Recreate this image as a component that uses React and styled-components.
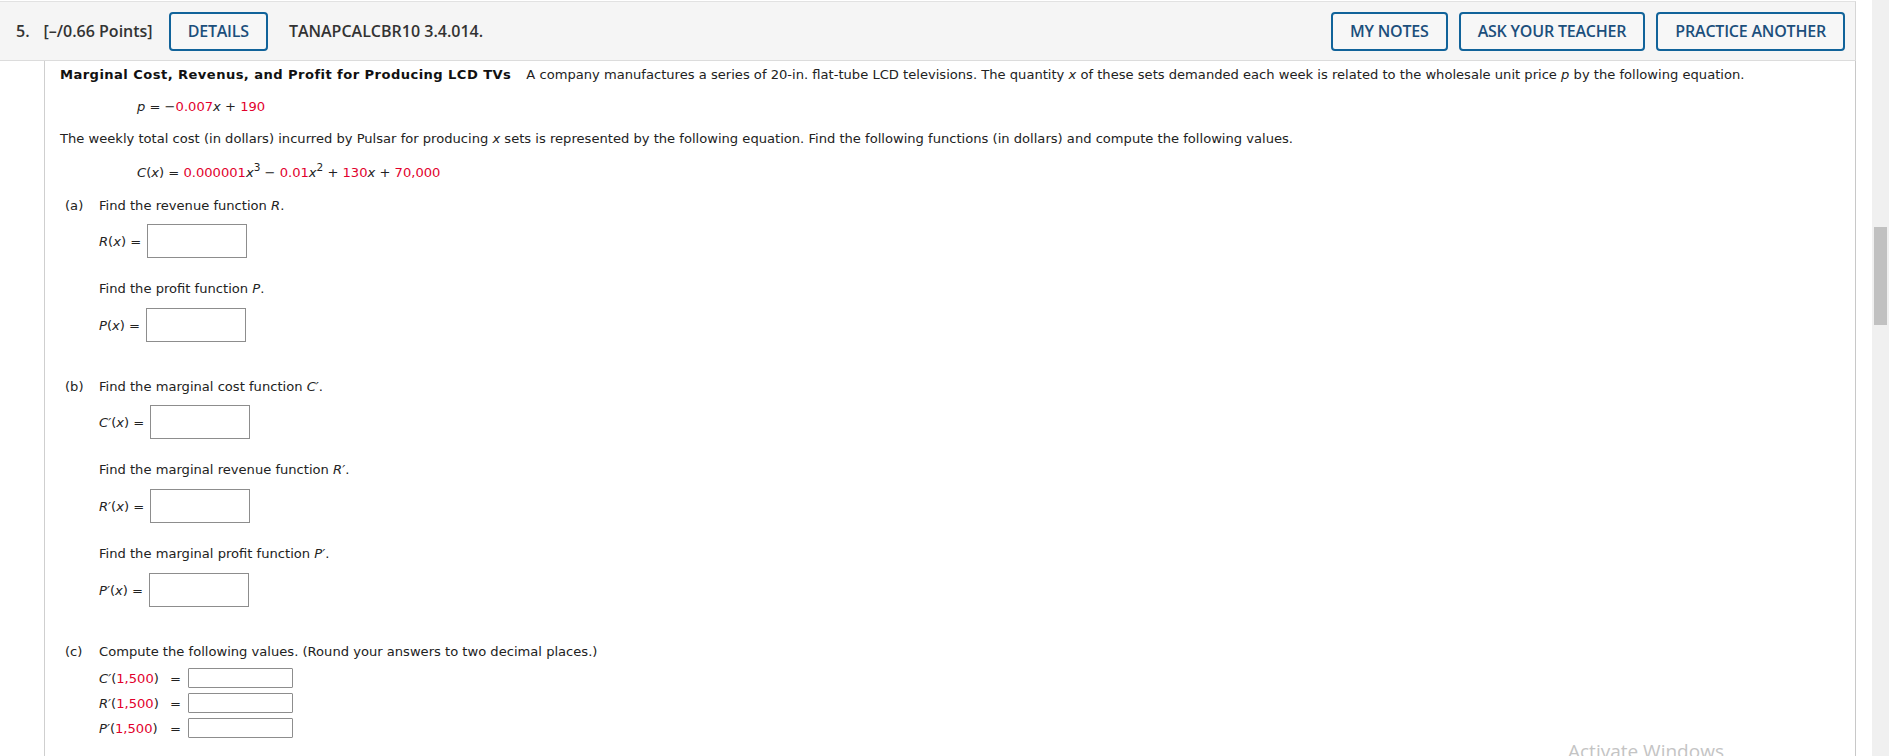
import React from 'react'
import styled, { createGlobalStyle } from 'styled-components'

const GlobalStyle = createGlobalStyle`
  html, body {
    margin: 0;
    padding: 0;
    background: #fff;
  }
  body {
    overflow: hidden;
  }
`

const parts = {
  b: [
    { text: 'Find the marginal cost function ', sym: 'C′', label: 'C′', mt: 9 },
    { text: 'Find the marginal revenue function ', sym: 'R′', label: 'R′', mt: 10 },
    { text: 'Find the marginal profit function ', sym: 'P′', label: 'P′', mt: 10 },
  ],
  c: ['C′', 'R′', 'P′'],
}

const App = () => {
  return (
    <>
      <GlobalStyle />
      <Page>
        <Main>
          <Header>
            <HeaderGroup>
              <QNum>5.</QNum>
              <Points>[–/0.66 Points]</Points>
              <OutlineButton>DETAILS</OutlineButton>
              <Code>TANAPCALCBR10 3.4.014.</Code>
            </HeaderGroup>
            <HeaderGroup $gap={11}>
              <OutlineButton>MY NOTES</OutlineButton>
              <OutlineButton>ASK YOUR TEACHER</OutlineButton>
              <OutlineButton>PRACTICE ANOTHER</OutlineButton>
            </HeaderGroup>
          </Header>

          <Body>
            <Line $mt={5}>
              <Title>Marginal Cost, Revenus, and Profit for Producing LCD TVs</Title>
              A company manufactures a series of 20-in. flat-tube LCD televisions. The quantity <Var>x</Var> of these sets demanded each week is related to the wholesale unit price <Var>p</Var> by the following equation.
            </Line>
            <Equation $mt={14}>
              <Var>p</Var> = −<Red>0.007</Red><Var>x</Var> + <Red>190</Red>
            </Equation>
            <Line $mt={14}>
              The weekly total cost (in dollars) incurred by Pulsar for producing <Var>x</Var> sets is represented by the following equation. Find the following functions (in dollars) and compute the following values.
            </Line>
            <Equation $mt={16}>
              <Var>C</Var>(<Var>x</Var>) = <Red>0.000001</Red><Var>x</Var><Sup>3</Sup> − <Red>0.01</Red><Var>x</Var><Sup>2</Sup> + <Red>130</Red><Var>x</Var> + <Red>70,000</Red>
            </Equation>

            <Part $mt={15}>
              <PartLabel>(a)</PartLabel>
              <PartBody>
                <Line>Find the revenue function <Var>R</Var>.</Line>
                <AnswerRow $mt={9}>
                  <Var>R</Var>(<Var>x</Var>) = <AnswerBox />
                </AnswerRow>
                <Line $mt={22}>Find the profit function <Var>P</Var>.</Line>
                <AnswerRow $mt={10}>
                  <Var>P</Var>(<Var>x</Var>) = <AnswerBox />
                </AnswerRow>
              </PartBody>
            </Part>

            <Part $mt={36}>
              <PartLabel>(b)</PartLabel>
              <PartBody>
                {parts.b.map((q, i) => (
                  <React.Fragment key={q.label}>
                    <Line $mt={i === 0 ? 0 : 22}>
                      {q.text}<Var>{q.sym}</Var>.
                    </Line>
                    <AnswerRow $mt={q.mt}>
                      <Var>{q.label}</Var>(<Var>x</Var>) = <AnswerBox />
                    </AnswerRow>
                  </React.Fragment>
                ))}
              </PartBody>
            </Part>

            <Part $mt={36}>
              <PartLabel>(c)</PartLabel>
              <PartBody>
                <Line>Compute the following values. (Round your answers to two decimal places.)</Line>
                <ValueGrid>
                  {parts.c.map((s) => (
                    <React.Fragment key={s}>
                      <span><Var>{s}</Var>(<Red>1,500</Red>)</span>
                      <span>=</span>
                      <SmallBox />
                    </React.Fragment>
                  ))}
                </ValueGrid>
              </PartBody>
            </Part>
          </Body>
        </Main>

        <Scrollbar>
          <Thumb />
        </Scrollbar>

        <Watermark>Activate Windows</Watermark>
      </Page>
    </>
  )
}

export default App

const Page = styled.div`
  position: relative;
  display: flex;
  height: 756px;
  overflow: hidden;
`

const Main = styled.div`
  width: 1856px;
  display: flex;
  flex-direction: column;
`

const Header = styled.div`
  box-sizing: border-box;
  margin-top: 1px;
  height: 60px;
  display: flex;
  align-items: center;
  justify-content: space-between;
  padding: 0 10px 0 16px;
  background: #f5f5f5;
  border-top: 1px solid #e2e2e2;
  border-bottom: 1px solid #dcdcdc;
  border-right: 1px solid #d6d6d6;
  font-family: "Open Sans", "Noto Sans", sans-serif;
  font-weight: 600;
  font-size: 16px;
  color: #333;
`

const HeaderGroup = styled.div`
  display: flex;
  align-items: center;
  gap: ${(p) => p.$gap || 0}px;
`

const QNum = styled.span`
  margin-right: 14px;
`

const Points = styled.span`
  margin-right: 16px;
`

const Code = styled.span`
  margin-left: 21px;
`

const OutlineButton = styled.button`
  box-sizing: border-box;
  height: 39px;
  padding: 0 17px;
  background: #f7f7f7;
  border: 2px solid #11639a;
  border-radius: 4px;
  font-family: "Open Sans", "Noto Sans", sans-serif;
  font-weight: 600;
  font-size: 16px;
  color: #1c4f7c;
  letter-spacing: -0.2px;
`

const Body = styled.div`
  flex: 1;
  margin-left: 44px;
  padding-left: 15px;
  border-left: 1px solid #cfcfcf;
  border-right: 1px solid #c8c8c8;
  font-family: "DejaVu Sans", Verdana, sans-serif;
  font-size: 13.1px;
  color: #222;
`

const Line = styled.div`
  margin-top: ${(p) => p.$mt || 0}px;
  line-height: 18px;
  white-space: nowrap;
`

const Title = styled.b`
  margin-right: 15px;
  letter-spacing: 0.43px;
  color: #111;
`

const Equation = styled.div`
  margin-top: ${(p) => p.$mt || 0}px;
  padding-left: 77px;
  line-height: 18px;
`

const Var = styled.i`
  font-style: italic;
`

const Red = styled.span`
  color: #e2002c;
`

const Sup = styled.sup`
  font-size: 10.5px;
  line-height: 0;
  vertical-align: 6px;
`

const Part = styled.div`
  margin-top: ${(p) => p.$mt || 0}px;
  padding-left: 5px;
  display: grid;
  grid-template-columns: 34px 1fr;
`

const PartLabel = styled.div`
  line-height: 18px;
`

const PartBody = styled.div`
  display: flex;
  flex-direction: column;
`

const AnswerRow = styled.div`
  margin-top: ${(p) => p.$mt || 0}px;
  display: flex;
  align-items: center;
  white-space: pre;
`

const AnswerBox = styled.span`
  box-sizing: border-box;
  display: inline-block;
  width: 100px;
  height: 34px;
  margin-left: 2px;
  border: 1px solid #8d8d8d;
  background: #fff;
`

const ValueGrid = styled.div`
  margin-top: 7px;
  display: grid;
  grid-template-columns: 71px 18px 105px;
  grid-auto-rows: 20px;
  row-gap: 5px;
  align-items: center;
`

const SmallBox = styled.span`
  box-sizing: border-box;
  display: block;
  height: 20px;
  border: 1px solid #8d8d8d;
  border-radius: 1px;
`

const Scrollbar = styled.div`
  width: 17px;
  margin-left: 16px;
  background: #f0f0f0;
  display: flex;
  justify-content: center;
`

const Thumb = styled.div`
  width: 13px;
  height: 98px;
  margin-top: 227px;
  background: #c1c1c1;
`

const Watermark = styled.div`
  position: absolute;
  left: 1568px;
  top: 739px;
  font-family: "Open Sans", "Noto Sans", sans-serif;
  font-size: 19px;
  line-height: 24px;
  color: #c4c4c4;
  pointer-events: none;
`
